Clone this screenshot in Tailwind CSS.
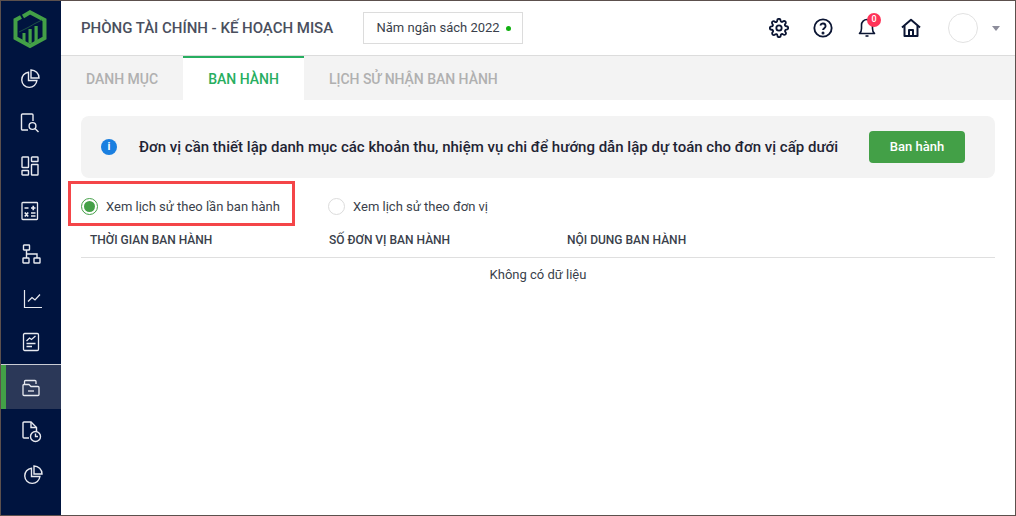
<!DOCTYPE html>
<html lang="en">
<head>
  <meta charset="UTF-8" />
  <title>Ban hành</title>
  <script src="https://cdn.jsdelivr.net/npm/@tailwindcss/browser@4"></script>
</head>
<body class="bg-white font-['Roboto',sans-serif]">
  <div class="relative w-[1016px] h-[516px] overflow-hidden border border-[#5c504d] flex">

    <!-- sidebar -->
    <aside class="w-[60px] h-full shrink-0 bg-[#00143f] flex flex-col text-[#e8eaf0]">
      <div class="h-[56px] flex items-center justify-center pr-[2px]">
        <svg width="36" height="40" viewBox="0 0 36 40" fill="none">
          <path d="M11 7.500 L18 3.200 L32.500 11 V29 L18 37 L3.500 29 V11 L9 8" stroke="#43a047" stroke-width="4" stroke-linejoin="miter"/>
          <path d="M7 23 L17 18 L22 15 L30 11" stroke="#1d4f45" stroke-width="1"/>
          <path d="M10.500 31 V24 h3 V32.500 Z M16.500 34.500 V20 h3.200 V34.500 Z M22.500 33 V17 h3.200 V31 Z" fill="#43a047"/>
        </svg>
      </div>
      <div class="h-[44px] flex items-center justify-center pr-[2px]">
        <svg width="20" height="20" viewBox="0 0 20 20" fill="none" stroke="currentColor" stroke-width="1.4"><path d="M8.500 3.200 A7.600 7.600 0 1 0 16.900 11.500 H8.500 Z"/><path d="M11 1 A8 8 0 0 1 19 9 H11 Z"/></svg>
      </div>
      <div class="h-[44px] flex items-center justify-center pr-[2px]">
        <svg width="20" height="20" viewBox="0 0 20 20" fill="none" stroke="currentColor" stroke-width="1.4"><path d="M8 17 H2.500 a1 1 0 0 1 -1 -1 V2 a1 1 0 0 1 1 -1 H12 a1 1 0 0 1 1 1 V8"/><circle cx="12.500" cy="13" r="3.400"/><path d="M15 15.500 L18.500 19"/></svg>
      </div>
      <div class="h-[44px] flex items-center justify-center pr-[2px] pb-[2px]">
        <svg width="18" height="20" viewBox="0 0 18 20" fill="none" stroke="currentColor" stroke-width="1.4"><rect x="1" y="1" width="6.500" height="10.500" rx=".6"/><rect x="1" y="14.500" width="6.500" height="4.500" rx=".6"/><rect x="10.500" y="1" width="6.500" height="4.500" rx=".6"/><rect x="10.500" y="8.500" width="6.500" height="10.500" rx=".6"/></svg>
      </div>
      <div class="h-[44px] flex items-center justify-center pr-[3px] pb-[1px]">
        <svg width="18" height="20" viewBox="0 0 18 20" fill="none" stroke="currentColor" stroke-width="1.300"><rect x="1" y="1.500" width="15.500" height="17" rx=".8"/><path stroke-width="1.700" d="M3.500 7 H7.500 M10 7 H14.500 M12.250 4.800 V9.200 M3.800 11.500 L7.200 15.500 M7.200 11.500 L3.800 15.500 M10 12 H14.500 M10 15 H14.500"/></svg>
      </div>
      <div class="h-[44px] flex items-center justify-center pb-[3px]">
        <svg width="19" height="20" viewBox="0 0 19 20" fill="none" stroke="currentColor" stroke-width="1.4"><rect x="1.500" y="1" width="6" height="5" rx=".5"/><rect x="1" y="14" width="6" height="5" rx=".5"/><rect x="12" y="14" width="6" height="5" rx=".5"/><path d="M4.500 6 V14 M4.500 10 H15 V14"/></svg>
      </div>
      <div class="h-[44px] flex items-center justify-center pl-[4px]">
        <svg width="20" height="20" viewBox="0 0 20 20" fill="none" stroke="currentColor" stroke-width="1.2"><path d="M1.500 1 V18.500 H19"/><path d="M5 12.500 L9 8.500 L12 11 L17 5.500"/></svg>
      </div>
      <div class="h-[44px] flex items-center justify-center pb-[2px]">
        <svg width="18" height="20" viewBox="0 0 18 20" fill="none" stroke="currentColor" stroke-width="1.3"><rect x="1.500" y="1.500" width="15" height="17" rx="1.200"/><path d="M4.500 9 L7.500 6 L9.500 7.500 L13.500 4 M4.500 11.500 H13.500 M4.500 14.500 H10"/></svg>
      </div>
      <div class="relative -mt-px h-[45px] pt-[2px] flex items-center justify-center bg-[#2b3858] border-t border-[#c9ccd4]">
        <span class="absolute left-0 top-0 bottom-0 w-[5px] bg-[#43a047]"></span>
        <svg width="18" height="18" viewBox="0 0 18 18" fill="none" stroke="currentColor" stroke-width="1.300"><path d="M2.500 6 V2.500 a1 1 0 0 1 1 -1 H13 a1 1 0 0 1 1 1 V5"/><path d="M1 6.500 a1 1 0 0 1 1 -1 H7 L9 7.500 H16 a1 1 0 0 1 1 1 V15.500 a1 1 0 0 1 -1 1 H2 a1 1 0 0 1 -1 -1 Z"/><path d="M6 12 H12"/></svg>
      </div>
      <div class="h-[44px] flex items-center justify-center pt-[1px] pl-[2px]">
        <svg width="20" height="22" viewBox="0 0 20 22" fill="none" stroke="currentColor" stroke-width="1.4"><path d="M7 17 H2 a1 1 0 0 1 -1 -1 V2 a1 1 0 0 1 1 -1 H9 L14.500 6.500 V10"/><path d="M9 1 V6.500 H14.500"/><circle cx="13.500" cy="15.500" r="5"/><path d="M13.500 12.500 V15.500 H16"/></svg>
      </div>
      <div class="h-[44px] flex items-center justify-center pl-[4px]">
        <svg width="20" height="20" viewBox="0 0 20 20" fill="none" stroke="currentColor" stroke-width="1.4"><path d="M8.500 3.200 A7.600 7.600 0 1 0 16.900 11.500 H8.500 Z"/><path d="M11 1 A8 8 0 0 1 19 9 H11 Z"/></svg>
      </div>
    </aside>

    <main class="flex-1 min-w-0 flex flex-col">
      <!-- header -->
      <header class="h-[55px] shrink-0 border-b border-[#dcdcdc] flex items-center pl-[20px] pr-[15px]">
        <h1 class="text-[15px] font-medium text-[#4a4f5e] w-[282px] tracking-[-0.015px]">PHÒNG TÀI CHÍNH - KẾ HOẠCH MISA</h1>
        <div class="w-[160px] h-[32px] border border-[#dcdcdc] flex items-center pl-[12.5px] text-[13px] text-[#3a3f4b] gap-[6.5px]">
          <span>Năm ngân sách 2022</span>
          <span class="w-[5px] h-[5px] rounded-full bg-[#12b012]"></span>
        </div>
        <div class="ml-auto flex items-center">
          <div class="w-[44px] flex justify-center">
            <svg width="20" height="20" viewBox="0 0 24 24" fill="none" stroke="#0b1533" stroke-width="2.200" stroke-linejoin="round"><circle cx="12" cy="12" r="3.200"/><path d="M19.400 15a1.650 1.650 0 0 0 .33 1.820l.06.06a2 2 0 1 1-2.830 2.830l-.06-.06a1.650 1.650 0 0 0-2.820 1.170V21a2 2 0 0 1-4 0v-.09a1.650 1.650 0 0 0-2.820-1.120l-.06.06a2 2 0 1 1-2.830-2.830l.06-.06a1.650 1.650 0 0 0-1.170-2.820H3a2 2 0 0 1 0-4h.09a1.650 1.650 0 0 0 1.120-2.820l-.06-.06a2 2 0 1 1 2.830-2.830l.06.06a1.650 1.650 0 0 0 2.820-1.170V3a2 2 0 0 1 4 0v.09a1.650 1.650 0 0 0 2.820 1.120l.06-.06a2 2 0 1 1 2.830 2.830l-.06.06a1.650 1.650 0 0 0 1.170 2.820H21a2 2 0 0 1 0 4h-.09a1.650 1.650 0 0 0-1.510 1z"/></svg>
          </div>
          <div class="w-[44px] flex justify-center">
            <svg width="20" height="20" viewBox="0 0 24 24" fill="none" stroke="#0b1533" stroke-width="2.200"><circle cx="12" cy="12" r="10.400"/><path d="M8.800 9a3.200 3.200 0 0 1 6.300.8c0 2.200-3.100 2.700-3.100 4.700"/><circle cx="12" cy="18" r=".7" fill="#0b1533"/></svg>
          </div>
          <div class="w-[44px] flex justify-center">
            <div class="relative w-[20px] h-[20px]">
              <svg width="20" height="20" viewBox="0 0 20 20" fill="none" stroke="#0b1533" stroke-width="1.600" stroke-linejoin="round"><path d="M2.500 15.500 c1.500 -1 2 -2.500 2 -5 V7 a5.500 5.500 0 0 1 11 0 V10.500 c0 2.500 .5 4 2 5 Z"/><path d="M8.500 18 H11.500"/></svg>
              <span class="absolute left-[10px] top-[-5px] w-[14px] h-[14px] rounded-full bg-[#ff3358] text-white text-[9px] font-medium flex items-center justify-center">0</span>
            </div>
          </div>
          <div class="w-[44px] flex justify-center">
            <svg width="20" height="20" viewBox="0 0 20 20" fill="none" stroke="#0b1533" stroke-width="2" stroke-linejoin="round"><path d="M1 9.500 L10 1.800 L19 9.500"/><path d="M3.500 8 V18 H16.500 V8"/><path d="M8 18 V12 H12 V18"/></svg>
          </div>
          <span class="ml-[15px] w-[30px] h-[30px] rounded-full border border-[#e2e2e2]"></span>
          <span class="ml-[14px] w-0 h-0 border-x-[4px] border-x-transparent border-t-[5px] border-t-[#8d8d9b]"></span>
        </div>
      </header>

      <!-- tabs -->
      <nav class="h-[44px] shrink-0 bg-[#f3f3f3] flex text-[14px] font-medium text-[#b0b0b0]">
        <div class="w-[122px] pl-[25px] pt-[13px]">DANH MỤC</div>
        <div class="w-[121px] bg-white border-t-2 border-[#27ae60] text-[#27ae60] text-center pt-[11px]">BAN HÀNH</div>
        <div class="pl-[25px] pt-[13px] tracking-[-0.03px]">LỊCH SỬ NHẬN BAN HÀNH</div>
      </nav>

      <div class="flex-1 pl-[20px] pr-[20px] pt-[16px]">
        <!-- notice -->
        <div class="h-[62px] bg-[#f3f3f3] rounded-[8px] flex items-center pl-[20px] pr-[30px]">
          <span class="w-[16px] h-[16px] rounded-full bg-[#1a7fe0] text-white text-[11px] font-bold flex items-center justify-center">i</span>
          <p class="ml-[22px] text-[15px] font-medium text-[#1f2433] tracking-[0.01px]">Đơn vị cần thiết lập danh mục các khoản thu, nhiệm vụ chi để hướng dẫn lập dự toán cho đơn vị cấp dưới</p>
          <button class="ml-auto w-[96px] h-[32px] rounded-[4px] bg-[#43a047] text-white text-[13px] font-medium">Ban hành</button>
        </div>

        <!-- radios -->
        <div class="flex items-center h-[55px] text-[13px] text-[#3a3f4b] pt-[2px]">
          <span class="w-[17px] h-[17px] rounded-full border border-[#43a047] flex items-center justify-center"><span class="w-[11px] h-[11px] rounded-full bg-[#43a047]"></span></span>
          <span class="ml-[8px] w-[222px]">Xem lịch sử theo lần ban hành</span>
          <span class="w-[17px] h-[17px] rounded-full border border-[#dcdcdc]"></span>
          <span class="ml-[8px]">Xem lịch sử theo đơn vị</span>
        </div>

        <!-- table -->
        <div class="h-[25px] border-b border-[#dfdfdf] flex text-[12px] leading-[14px] font-medium text-[#3a3f4b] pl-[9px]">
          <div class="w-[239px]">THỜI GIAN BAN HÀNH</div>
          <div class="w-[238px]">SỐ ĐƠN VỊ BAN HÀNH</div>
          <div>NỘI DUNG BAN HÀNH</div>
        </div>
        <p class="text-center text-[13px] text-[#3a3f4b] pt-[7px]">Không có dữ liệu</p>
      </div>
    </main>

    <!-- annotation -->
    <div class="absolute left-[67px] top-[180px] w-[227px] h-[45px] border-[3px] border-[#f44548]"></div>
  </div>
</body>
</html>
